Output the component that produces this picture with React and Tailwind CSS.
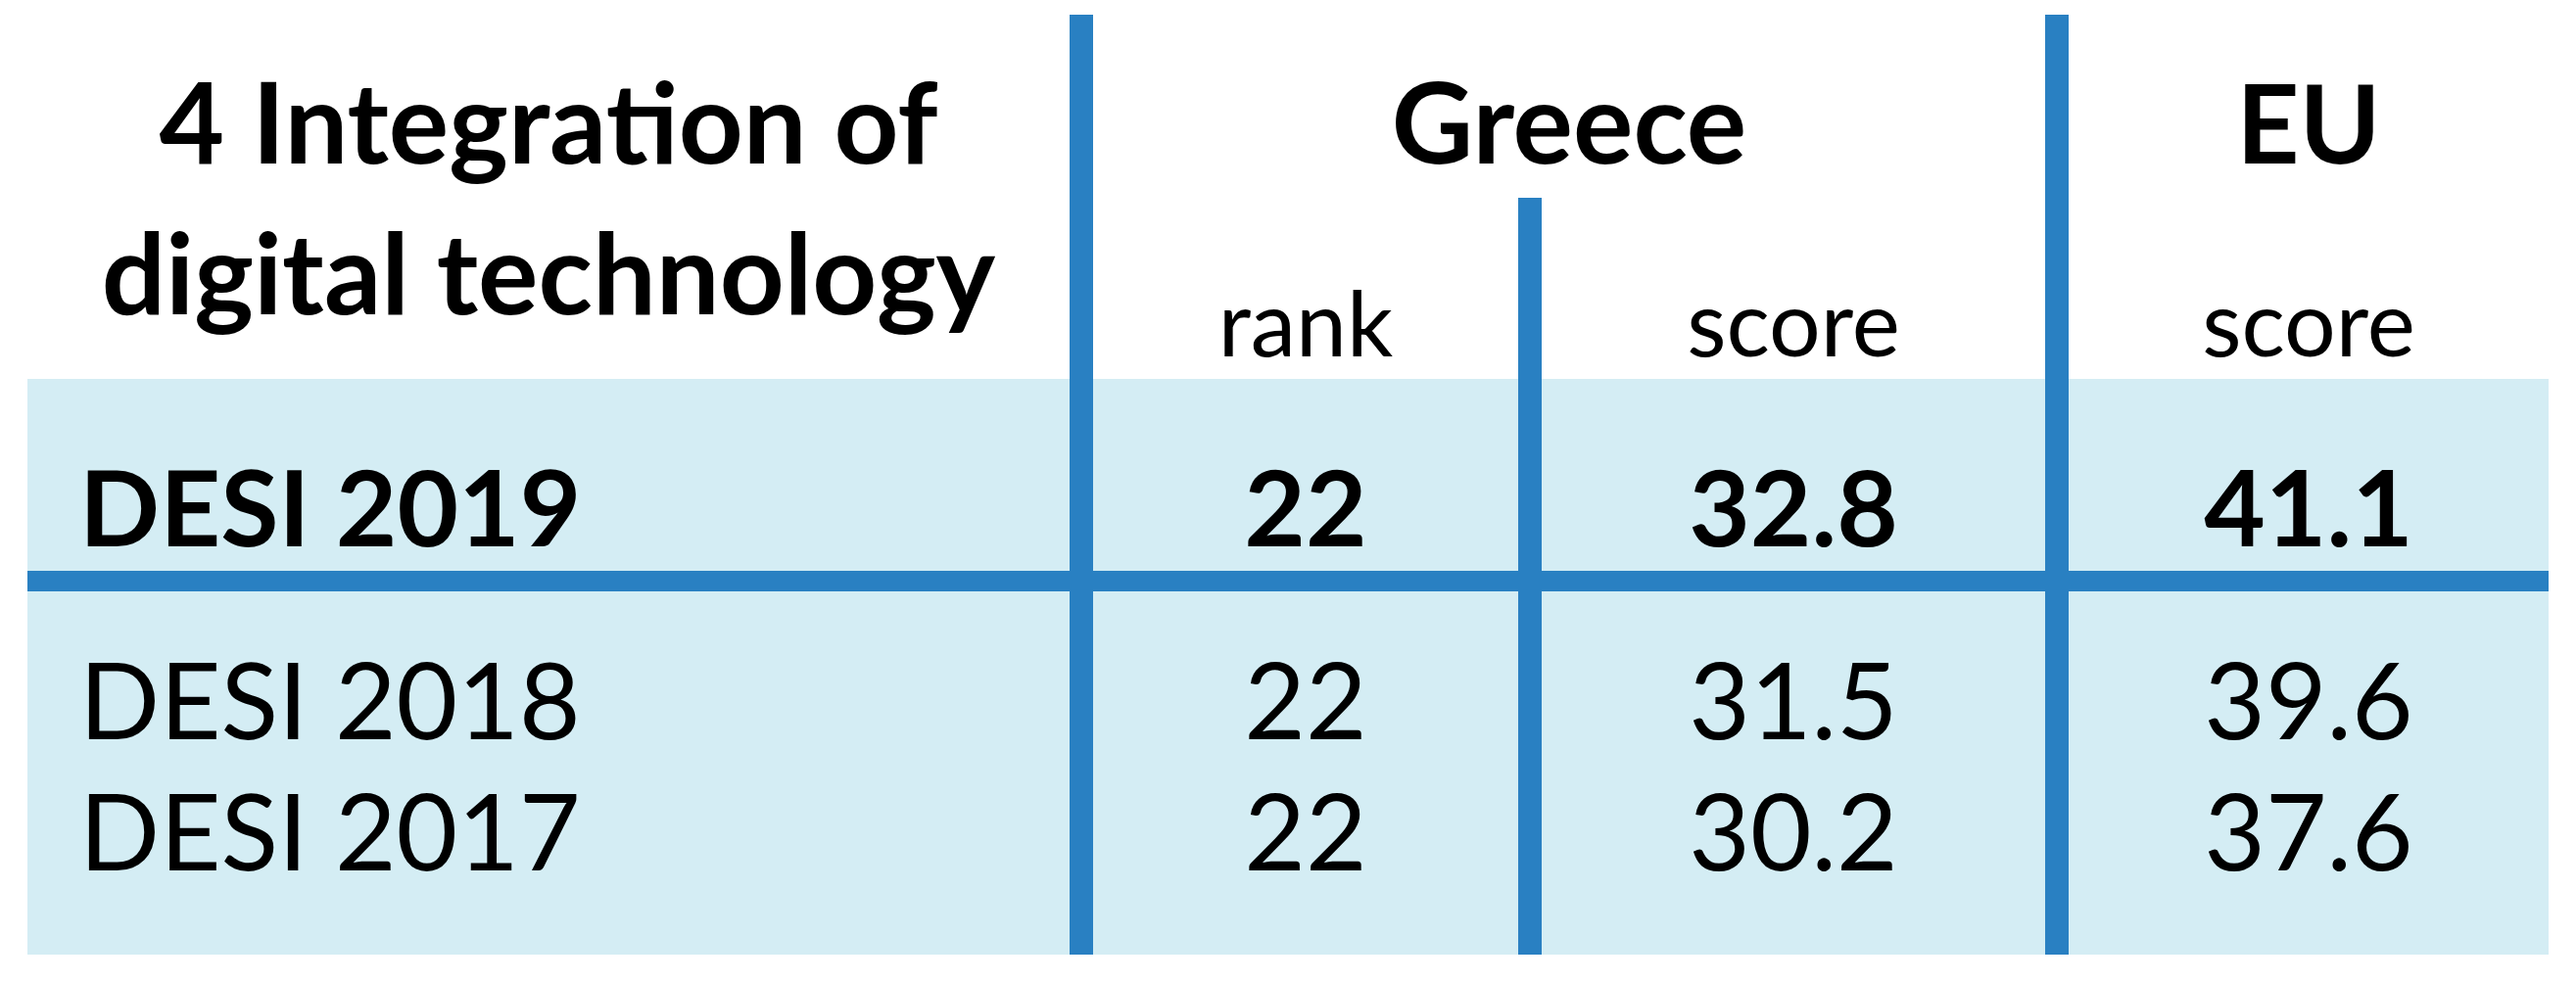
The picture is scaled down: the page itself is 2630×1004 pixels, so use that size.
export default function App() {
  const font = { fontFamily: "Lato, 'Open Sans', sans-serif" };
  return (
    <div className="w-[2630px] h-[1004px] bg-white pt-[15px] pl-[28px]" style={font}>
      <div className="grid grid-cols-[1064px_24px_434px_24px_514px_24px_490px] grid-rows-[187px_185px_196px_21px_180px_191px] text-black">
        {/* light blue body background */}
        <div className="col-start-1 col-end-8 row-start-3 row-end-7 bg-[#d4edf4]" />

        {/* header col 1 */}
        <div className="col-start-1 row-start-1 row-end-3 pt-[30px] text-center text-[115px] leading-[154px] font-bold">
          4 Integration of
          <br />
          digital technology
        </div>

        {/* Greece */}
        <div className="col-start-3 col-end-6 row-start-1 pt-[30px] text-center text-[115px] leading-[154px] font-bold">
          Greece
        </div>
        {/* EU */}
        <div className="col-start-7 row-start-1 pt-[32px] text-center text-[112px] leading-[154px] font-bold">
          EU
        </div>

        {/* sub headers */}
        <div className="col-start-3 row-start-2 pt-[80px] text-center text-[93px] leading-none">rank</div>
        <div className="col-start-5 row-start-2 pt-[80px] text-center text-[93px] leading-none">score</div>
        <div className="col-start-7 row-start-2 pt-[80px] text-center text-[93px] leading-none">score</div>

        {/* row DESI 2019 */}
        <div className="col-start-1 row-start-3 pt-[75px] pl-[53px] text-[108px] leading-none font-bold">DESI 2019</div>
        <div className="col-start-3 row-start-3 pt-[75px] text-center text-[108px] leading-none font-bold">22</div>
        <div className="col-start-5 row-start-3 pt-[75px] text-center text-[108px] leading-none font-bold">32.8</div>
        <div className="col-start-7 row-start-3 pt-[75px] text-center text-[108px] leading-none font-bold">41.1</div>

        {/* horizontal rule */}
        <div className="col-start-1 col-end-8 row-start-4 bg-[#2980c2]" />

        {/* row DESI 2018 */}
        <div className="col-start-1 row-start-5 pt-[55px] pl-[53px] text-[108px] leading-none">DESI 2018</div>
        <div className="col-start-3 row-start-5 pt-[55px] text-center text-[108px] leading-none">22</div>
        <div className="col-start-5 row-start-5 pt-[55px] text-center text-[108px] leading-none">31.5</div>
        <div className="col-start-7 row-start-5 pt-[55px] text-center text-[108px] leading-none">39.6</div>

        {/* row DESI 2017 */}
        <div className="col-start-1 row-start-6 pt-[9px] pl-[53px] text-[108px] leading-none">DESI 2017</div>
        <div className="col-start-3 row-start-6 pt-[9px] text-center text-[108px] leading-none">22</div>
        <div className="col-start-5 row-start-6 pt-[9px] text-center text-[108px] leading-none">30.2</div>
        <div className="col-start-7 row-start-6 pt-[9px] text-center text-[108px] leading-none">37.6</div>

        {/* vertical rules */}
        <div className="col-start-2 row-start-1 row-end-7 bg-[#2980c2]" />
        <div className="col-start-4 row-start-2 row-end-7 bg-[#2980c2]" />
        <div className="col-start-6 row-start-1 row-end-7 bg-[#2980c2]" />
      </div>
    </div>
  );
}
